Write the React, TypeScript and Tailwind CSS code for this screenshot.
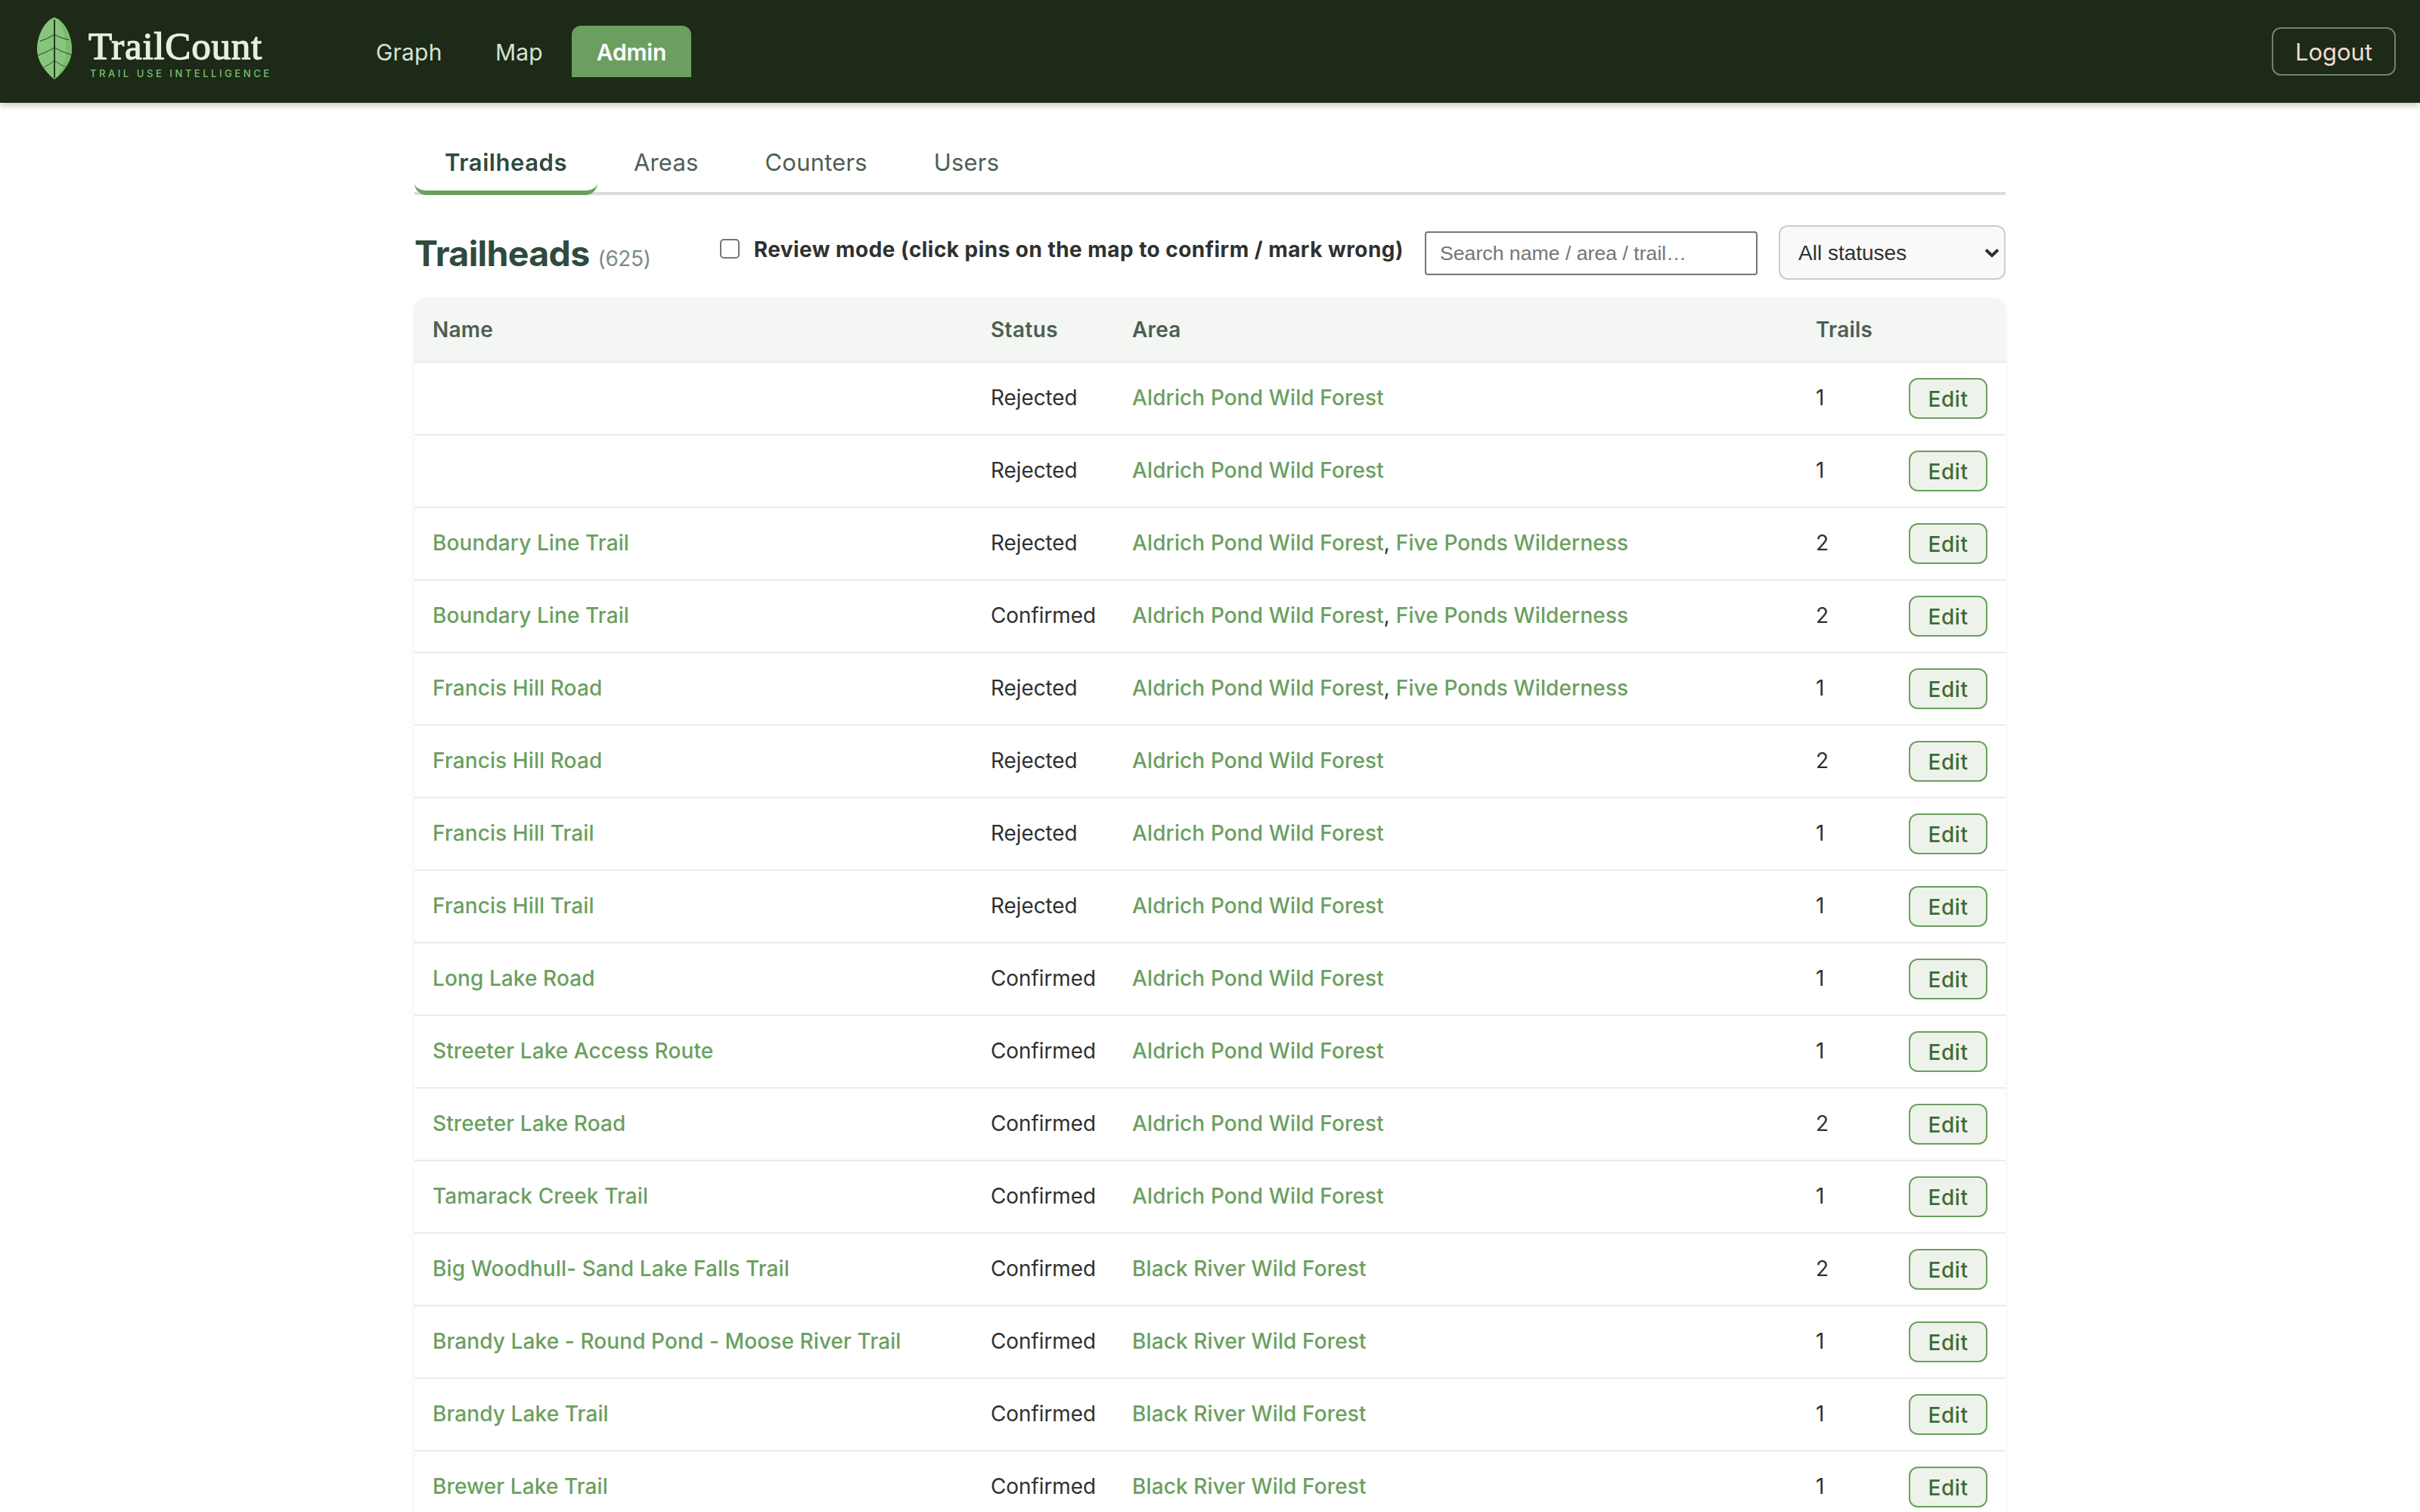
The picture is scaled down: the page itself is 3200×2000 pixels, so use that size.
import React, { useState } from 'react';

interface Trailhead {
  id: number;
  name: string;
  status: 'Rejected' | 'Confirmed';
  areas: string[];
  trails: number;
}

const ALDRICH = 'Aldrich Pond Wild Forest';
const FIVE_PONDS = 'Five Ponds Wilderness';
const BLACK_RIVER = 'Black River Wild Forest';

const trailheads: Trailhead[] = [
  { id: 1, name: '', status: 'Rejected', areas: [ALDRICH], trails: 1 },
  { id: 2, name: '', status: 'Rejected', areas: [ALDRICH], trails: 1 },
  { id: 3, name: 'Boundary Line Trail', status: 'Rejected', areas: [ALDRICH, FIVE_PONDS], trails: 2 },
  { id: 4, name: 'Boundary Line Trail', status: 'Confirmed', areas: [ALDRICH, FIVE_PONDS], trails: 2 },
  { id: 5, name: 'Francis Hill Road', status: 'Rejected', areas: [ALDRICH, FIVE_PONDS], trails: 1 },
  { id: 6, name: 'Francis Hill Road', status: 'Rejected', areas: [ALDRICH], trails: 2 },
  { id: 7, name: 'Francis Hill Trail', status: 'Rejected', areas: [ALDRICH], trails: 1 },
  { id: 8, name: 'Francis Hill Trail', status: 'Rejected', areas: [ALDRICH], trails: 1 },
  { id: 9, name: 'Long Lake Road', status: 'Confirmed', areas: [ALDRICH], trails: 1 },
  { id: 10, name: 'Streeter Lake Access Route', status: 'Confirmed', areas: [ALDRICH], trails: 1 },
  { id: 11, name: 'Streeter Lake Road', status: 'Confirmed', areas: [ALDRICH], trails: 2 },
  { id: 12, name: 'Tamarack Creek Trail', status: 'Confirmed', areas: [ALDRICH], trails: 1 },
  { id: 13, name: 'Big Woodhull- Sand Lake Falls Trail', status: 'Confirmed', areas: [BLACK_RIVER], trails: 2 },
  { id: 14, name: 'Brandy Lake - Round Pond - Moose River Trail', status: 'Confirmed', areas: [BLACK_RIVER], trails: 1 },
  { id: 15, name: 'Brandy Lake Trail', status: 'Confirmed', areas: [BLACK_RIVER], trails: 1 },
  { id: 16, name: 'Brewer Lake Trail', status: 'Confirmed', areas: [BLACK_RIVER], trails: 1 },
];

const tabs = ['Trailheads', 'Areas', 'Counters', 'Users'];

function LeafLogo() {
  return (
    <svg width="46" height="82" viewBox="0 0 46 82" fill="none">
      <path d="M23 0C36 4 46 24 46 42C46 59 34 73 23 82C12 73 0 59 0 42C0 24 10 4 23 0Z" fill="#87c57d" />
      <path d="M27 2C38 8 46 26 46 42C46 59 34 73 25 80.500C36 66 40 52 38 36C37 22 33 10 27 2Z" fill="#79bb6e" />
      <path d="M23 3V80" stroke="#1f3d1b" strokeWidth="2" />
      <g stroke="#1f3d1b" strokeWidth="1">
        <path d="M4 31.500Q15 28 23 22.700Q31 27.500 42 29.700" />
        <path d="M0.700 50.500Q13 46 23 40Q33 46 45.500 49.500" />
        <path d="M8.700 66Q17 62 23 57.300Q29 61.500 37.700 65.700" strokeWidth="0.800" />
      </g>
    </svg>
  );
}

function Header() {
  return (
    <header className="flex h-[136px] items-center justify-between bg-[#1c2a17] pr-8 pl-[49px] shadow-[0_4px_8px_rgba(0,0,0,0.2)]">
      <div className="flex items-center">
        <div className="flex h-[136px] w-[415px] items-start">
          <div className="mt-[23px]">
            <LeafLogo />
          </div>
          <div className="mt-[35px] ml-[22px]">
            <div className="font-['Liberation_Serif',serif] text-[51px] leading-[52px] tracking-[0.8px] text-[#e6f0e0] [-webkit-text-stroke:1.3px_#e6f0e0]">
              TrailCount
            </div>
            <div className="mt-[2px] ml-[2px] text-[13px] leading-4 font-medium tracking-[3.55px] whitespace-nowrap text-[#7fbf73]">
              TRAIL USE INTELLIGENCE
            </div>
          </div>
        </div>
        <nav className="flex gap-2 text-[30px] leading-[66px] tracking-[0.2px] text-[#d5e3d3]">
          <a className="h-[68px] w-[151px] pt-[2px] pl-[33px]">Graph</a>
          <a className="h-[68px] w-[125px] pt-[2px] pl-8">Map</a>
          <a className="h-[68px] w-[158px] rounded-t-xl bg-[#6b9f60] pt-[2px] text-center font-semibold tracking-[-0.2px] text-white">
            Admin
          </a>
        </nav>
      </div>
      <button className="h-16 w-[164px] rounded-xl border-2 border-[#71816c] pt-px text-[31px] leading-none text-[#f3dad4]">
        Logout
      </button>
    </header>
  );
}

export default function App() {
  const [activeTab, setActiveTab] = useState('Trailheads');
  const [reviewMode, setReviewMode] = useState(false);

  return (
    <div className="h-screen overflow-hidden bg-white font-['Inter',sans-serif] text-[#2f3130]">
      <Header />

      <main className="mx-auto w-[2104px] pt-[42px]">
        {/* Section tabs */}
        <div className="mb-10 flex h-20 gap-2 shadow-[inset_0_-4px_0_#d9ddd9]">
          {tabs.map((tab) => (
            <button
              key={tab}
              onClick={() => setActiveTab(tab)}
              className={`rounded-2xl border-b-[6px] px-10 text-[31px] ${
                tab === activeTab
                  ? 'border-[#6b9f60] font-semibold tracking-[0.54px] text-[#2f4a3e]'
                  : 'border-transparent tracking-[0.18px] text-[#4d5f54]'
              }`}
            >
              {tab}
            </button>
          ))}
        </div>

        {/* Title and filters */}
        <div className="mb-6 flex h-[72px] items-center">
          <h2 className="flex-1 pt-[2px] text-[46.5px] leading-none font-bold tracking-[-0.68px] text-[#2f4a3e]">
            Trailheads
            <span className="ml-[11px] text-[28px] font-normal tracking-[-0.4px] text-[#7c8a82]">(625)</span>
          </h2>
          <label className="mr-[28px] flex items-center pb-2 text-[28px] font-bold tracking-[0.45px] whitespace-nowrap">
            <input
              type="checkbox"
              checked={reviewMode}
              onChange={(e) => setReviewMode(e.target.checked)}
              className="mr-[19px] mb-[2px] size-[26px] appearance-none rounded-[5px] border-2 border-[#767676] bg-white"
            />
            Review mode (click pins on the map to confirm / mark wrong)
          </label>
          <input
            type="text"
            placeholder="Search name / area / trail…"
            className="relative top-px mr-7 h-[58px] w-[440px] rounded-[4px] border-2 border-[#767676] bg-white px-[18px] font-['Liberation_Sans',sans-serif] text-[26.67px] placeholder:text-[#757575]"
          />
          <div className="relative">
            <select className="h-[72px] w-[300px] appearance-none rounded-xl border-2 border-[#cccccc] bg-[#f9f9f9] px-6 pt-px font-['Liberation_Sans',sans-serif] text-[28px]">
              <option>All statuses</option>
            </select>
            <svg className="absolute top-[30px] right-[8px]" width="20" height="14" viewBox="0 0 20 14" fill="none">
              <path d="M2 2.500L10 10L18 2.500" stroke="#2f3130" strokeWidth="4" />
            </svg>
          </div>
        </div>

        {/* Trailhead list */}
        <div className="overflow-hidden rounded-2xl shadow-[0_2px_6px_rgba(0,0,0,0.08)]">
          <table className="w-full table-fixed border-separate border-spacing-0 text-left text-[28px] leading-[40px] [&_td]:border-b-2 [&_td]:border-[#ebebeb] [&_th]:border-b-2 [&_th]:border-[#ebebeb]">
            <thead>
              <tr className="h-[86px] bg-[#f3f6f3] text-[#4d5f54]">
                <th className="w-[738px] px-6 font-semibold tracking-[0.2px]">Name</th>
                <th className="w-[187px] px-6 font-semibold tracking-[0.4px]">Status</th>
                <th className="w-[903px] px-6 font-semibold tracking-[0.2px]">Area</th>
                <th className="w-[124px] pr-6 pl-[25px] font-semibold tracking-[0.2px]">Trails</th>
                <th></th>
              </tr>
            </thead>
            <tbody>
              {trailheads.map((trailhead) => (
                <tr key={trailhead.id} className="h-24 bg-white">
                  <td className="px-6 pb-[2px] font-medium tracking-[0.1px] text-[#6b9f60]">{trailhead.name}</td>
                  <td className="px-6 pb-[2px] tracking-[-0.1px]">{trailhead.status}</td>
                  <td className="px-6 pb-[2px]">
                    {trailhead.areas.map((area, i) => (
                      <React.Fragment key={area}>
                        {i > 0 && ', '}
                        <a className="font-medium tracking-[0.12px] text-[#6b9f60]">{area}</a>
                      </React.Fragment>
                    ))}
                  </td>
                  <td className="pr-6 pb-[2px] pl-[25px]">{trailhead.trails}</td>
                  <td className="px-6">
                    <button className="block h-[54px] w-[104px] rounded-xl border-2 border-[#6b9f60] bg-[#edf3ea] pt-[2px] leading-none font-medium tracking-[0.6px] text-[#3f6b35]">
                      Edit
                    </button>
                  </td>
                </tr>
              ))}
            </tbody>
          </table>
        </div>
      </main>
    </div>
  );
}
